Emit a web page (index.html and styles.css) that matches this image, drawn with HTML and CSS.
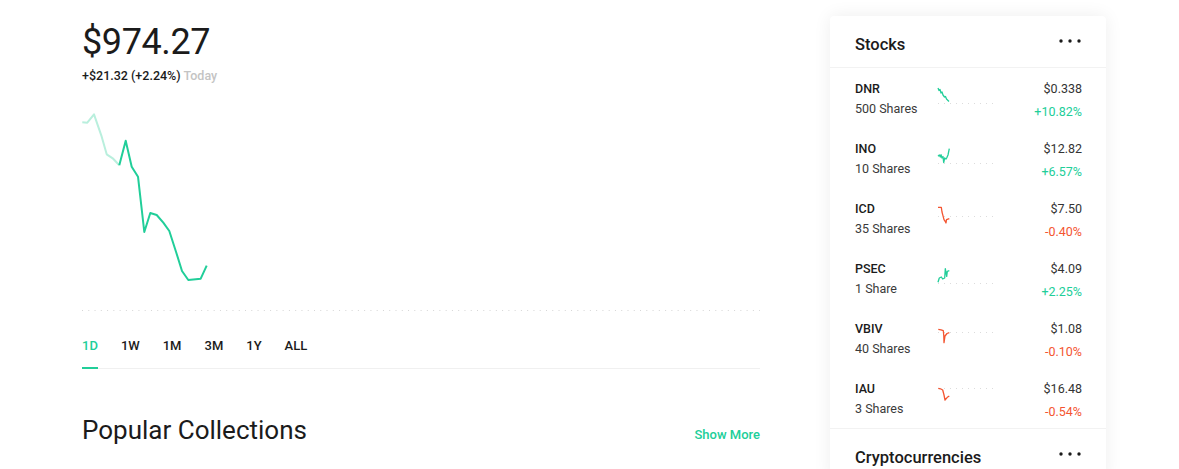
FILE: index.html
```html
<!DOCTYPE html>
<html lang="en">
<head>
    <meta charset="UTF-8">
    <meta name="viewport" content="width=device-width, initial-scale=1.0">
    <title>Portfolio</title>
    <link rel="stylesheet" href="styles.css">
</head>
<body>
    <div class="page">
        <main class="main">
            <section class="quote">
                <div class="quote-price">$974.27</div>
                <div class="quote-change">+$21.32 (+2.24%) <span class="quote-today">Today</span></div>
            </section>

            <svg class="chart" width="678" height="215" viewBox="0 0 678 215">
                <line x1="0" y1="210.5" x2="678" y2="210.5" class="chart-base"/>
                <polyline class="chart-past" points="0.3,22.3 5.3,22.7 12,14.3 19.7,36.7 24.7,54.3 30.7,58.3 37.3,65.3"/>
                <polyline class="chart-line" points="37.3,65.3 43.7,40.7 49.7,66.7 56,76.7 62.3,132 68.3,113 74.7,115 81.3,122.7 87.3,131 94,151.7 100,171 106.3,180 118.7,178.7 124.7,165.7"/>
            </svg>

            <nav class="ranges">
                <a class="range active">1D</a>
                <a class="range">1W</a>
                <a class="range">1M</a>
                <a class="range">3M</a>
                <a class="range">1Y</a>
                <a class="range">ALL</a>
            </nav>

            <div class="section-head">
                <h2>Popular Collections</h2>
                <a class="show-more">Show More</a>
            </div>
        </main>

        <aside class="watch">
            <section class="watch-group">
                <header class="watch-head">
                    <h3>Stocks</h3>
                    <svg class="more" width="22" height="6" viewBox="0 0 22 6"><circle cx="2" cy="3" r="1.7"/><circle cx="11" cy="3" r="1.7"/><circle cx="20" cy="3" r="1.7"/></svg>
                </header>
                <ul class="watch-list">
                    <li class="watch-row">
                        <div class="holding"><div class="symbol">DNR</div><div class="shares">500 Shares</div></div>
                        <svg class="spark up" width="58" height="30" viewBox="0 0 58 30">
                            <line x1="1" y1="23.5" x2="58" y2="23.5" class="spark-base"/>
                            <polyline points="1,8 2,10.5 3,9.5 4,13 5,12 6,15 7.5,17 8.5,16.5 9.5,19 12,21.5"/>
                        </svg>
                        <div class="value"><div class="price">$0.338</div><div class="change">+10.82%</div></div>
                    </li>
                    <li class="watch-row">
                        <div class="holding"><div class="symbol">INO</div><div class="shares">10 Shares</div></div>
                        <svg class="spark up" width="58" height="30" viewBox="0 0 58 30">
                            <line x1="1" y1="23.5" x2="58" y2="23.5" class="spark-base"/>
                            <polyline points="1,16.3 2.3,15 3.3,17 4,14.7 5,18 6,16.5 6.7,22.5 7.7,18 9,19 10,17.3 11,15 12.3,8.7"/>
                        </svg>
                        <div class="value"><div class="price">$12.82</div><div class="change">+6.57%</div></div>
                    </li>
                    <li class="watch-row">
                        <div class="holding"><div class="symbol">ICD</div><div class="shares">35 Shares</div></div>
                        <svg class="spark down" width="58" height="30" viewBox="0 0 58 30">
                            <line x1="1" y1="16.5" x2="58" y2="16.5" class="spark-base"/>
                            <polyline points="1,7.3 4.3,7.3 5,12 5.7,14.7 7,19.7 8.3,21.5 9,23 9.5,19.7 12.3,18.7"/>
                        </svg>
                        <div class="value"><div class="price">$7.50</div><div class="change down">-0.40%</div></div>
                    </li>
                    <li class="watch-row">
                        <div class="holding"><div class="symbol">PSEC</div><div class="shares">1 Share</div></div>
                        <svg class="spark up" width="58" height="30" viewBox="0 0 58 30">
                            <line x1="1" y1="23.5" x2="58" y2="23.5" class="spark-base"/>
                            <polyline points="1,22.3 2.3,18 4.3,17 5.7,19 7.7,18 8.3,8.7 9.7,16.3 10.3,11.3 12.3,10.7"/>
                        </svg>
                        <div class="value"><div class="price">$4.09</div><div class="change">+2.25%</div></div>
                    </li>
                    <li class="watch-row">
                        <div class="holding"><div class="symbol">VBIV</div><div class="shares">40 Shares</div></div>
                        <svg class="spark down" width="58" height="30" viewBox="0 0 58 30">
                            <line x1="1" y1="12.5" x2="58" y2="12.5" class="spark-base"/>
                            <polyline points="1.3,9.3 4,9.8 6.3,10.7 6.8,16 7,22.7 8,16 10,13.5 12.3,12.7"/>
                        </svg>
                        <div class="value"><div class="price">$1.08</div><div class="change down">-0.10%</div></div>
                    </li>
                    <li class="watch-row">
                        <div class="holding"><div class="symbol">IAU</div><div class="shares">3 Shares</div></div>
                        <svg class="spark down" width="58" height="30" viewBox="0 0 58 30">
                            <line x1="1" y1="8.5" x2="58" y2="8.5" class="spark-base"/>
                            <polyline points="1.3,8.3 3.5,8.8 5.7,10 7,15 8,20 10.3,17.3 12.3,16"/>
                        </svg>
                        <div class="value"><div class="price">$16.48</div><div class="change down">-0.54%</div></div>
                    </li>
                </ul>
            </section>

            <section class="watch-group">
                <header class="watch-head">
                    <h3>Cryptocurrencies</h3>
                    <svg class="more" width="22" height="6" viewBox="0 0 22 6"><circle cx="2" cy="3" r="1.7"/><circle cx="11" cy="3" r="1.7"/><circle cx="20" cy="3" r="1.7"/></svg>
                </header>
            </section>
        </aside>
    </div>
</body>
</html>
```

FILE: styles.css
```css
body {
    margin: 0;
    background-color: #fff;
    color: #1b1b1b;
    font-family: Roboto, 'Noto Sans', sans-serif;
    overflow: hidden;
}
.page {
    display: flex;
    align-items: flex-start;
    gap: 70px;
    padding-left: 82px;
}
.main {
    width: 678px;
    flex-shrink: 0;
}
.quote {
    padding-top: 24px;
}
.quote-price {
    font-size: 36px;
    line-height: 36px;
    letter-spacing: -0.4px;
}
.quote-change {
    margin-top: 8px;
    font-size: 12.5px;
    line-height: 16px;
    font-weight: 500;
}
.quote-today {
    color: #c4c4c4;
}
.chart {
    display: block;
    margin-top: 16px;
}
.chart-base {
    stroke: #d6d6d6;
    stroke-width: 1;
    stroke-dasharray: 1 5.27;
}
.chart-past,
.chart-line {
    fill: none;
    stroke-width: 2;
    stroke-linejoin: round;
}
.chart-past {
    stroke: #b9efdd;
}
.chart-line {
    stroke: #21ce99;
}
.ranges {
    display: flex;
    gap: 23px;
    margin-top: 23px;
    border-bottom: 1px solid #f0f0f0;
}
.range {
    padding-bottom: 13px;
    margin-bottom: -1px;
    border-bottom: 2px solid transparent;
    font-size: 13px;
    line-height: 16px;
    font-weight: 500;
    cursor: pointer;
}
.range.active {
    color: #21ce99;
    border-bottom-color: #21ce99;
}
.section-head {
    display: flex;
    justify-content: space-between;
    align-items: baseline;
    margin-top: 45px;
}
.section-head h2 {
    margin: 0;
    font-size: 26px;
    line-height: 32px;
    font-weight: 400;
}
.show-more {
    font-size: 13px;
    font-weight: 500;
    color: #21ce99;
    cursor: pointer;
}
.watch {
    width: 276px;
    flex-shrink: 0;
    margin-top: 16px;
    background-color: #fff;
    border-radius: 4px;
    box-shadow: 0 0 18px rgba(0, 0, 0, 0.07);
}
.watch-head {
    display: flex;
    justify-content: space-between;
    align-items: flex-start;
    padding: 19px 25px 12px;
    border-bottom: 1px solid #f2f2f2;
}
.watch-head h3 {
    margin: 0;
    font-size: 16.5px;
    line-height: 20px;
    font-weight: 500;
}
.more {
    margin-top: 3px;
    fill: #1b1b1b;
}
.watch-list {
    list-style: none;
    margin: 0;
    padding: 0;
    border-bottom: 1px solid #f2f2f2;
}
.watch-row {
    display: grid;
    grid-template-columns: 82px 58px 1fr;
    height: 60px;
    box-sizing: border-box;
    padding: 11px 24px 0 25px;
    font-size: 12.5px;
    line-height: 20px;
}
.symbol {
    font-weight: 500;
}
.shares {
    color: #3a3a3a;
}
.spark {
    margin-top: 1px;
}
.spark polyline {
    fill: none;
    stroke-width: 1.3;
    stroke-linejoin: round;
}
.spark.up polyline {
    stroke: #21ce99;
}
.spark.down polyline {
    stroke: #f45531;
}
.spark-base {
    stroke: #dcdcdc;
    stroke-width: 1;
    stroke-dasharray: 1 5;
}
.value {
    text-align: right;
}
.price {
    color: #333;
}
.change {
    margin-top: 3px;
    color: #21ce99;
}
.change.down {
    color: #f45531;
}
```
